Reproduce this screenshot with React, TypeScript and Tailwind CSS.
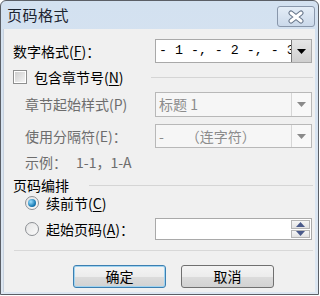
import React from "react"

const cjk = { fontFamily: '"Noto Sans CJK SC", "Noto Sans", sans-serif' }

function DropArrow({ disabled }: { disabled?: boolean }) {
  return (
    <svg width="9" height="5" viewBox="0 0 9 5">
      <path d="M0 0 H9 L4.5 5 Z" fill={disabled ? "#8a8a8a" : "#000"} />
    </svg>
  )
}

function Combo({ children, disabled, mono }: { children: React.ReactNode; disabled?: boolean; mono?: boolean }) {
  return (
    <div
      className={`ml-auto mr-[3px] w-[157px] h-full flex border ${
        disabled ? "border-[#b8b8b8] bg-[#f6f6f6]" : "border-[#a9a9a9] bg-white"
      }`}
    >
      <div
        className={`flex-1 flex items-center pl-[3px] overflow-hidden whitespace-nowrap ${
          disabled ? "text-[#8c8c8c]" : "text-black"
        } ${mono ? "text-[13.3px]" : "text-[14px]"}`}
        style={mono ? { fontFamily: '"Liberation Mono", monospace' } : cjk}
      >
        {children}
      </div>
      <div
        className={`w-[20px] flex items-center justify-center border-l ${
          disabled
            ? "border-[#d6d6d6] bg-[#f8f8f8]"
            : "border-[#7a7a7a] bg-gradient-to-b from-[#e6e6e6] to-[#cfcfcf]"
        }`}
      >
        <DropArrow disabled={disabled} />
      </div>
    </div>
  )
}

function Radio({ checked }: { checked?: boolean }) {
  return (
    <div className="w-[14px] h-[14px] rounded-full border border-[#8c8f94] bg-gradient-to-br from-[#e4e4e4] to-[#fbfbfb] flex items-center justify-center">
      {checked && (
        <div className="w-[8px] h-[8px] rounded-full bg-[radial-gradient(circle_at_35%_35%,#9fe0ff,#1c7fb8_60%,#0c4f80)]" />
      )}
    </div>
  )
}

function U({ c }: { c: string }) {
  return <span className="underline underline-offset-2">{c}</span>
}

export default function App() {
  return (
    <div className="w-[320px] h-[296px] bg-white" style={cjk}>
      <div className="w-[319px] h-[295px] border border-[#5b5f66] rounded-t-[6px] bg-gradient-to-b from-[#d3e1f0] to-[#dde7f2] flex flex-col">
        {/* Title bar */}
        <div className="h-[28px] flex items-center pl-[6px] pr-[3px]">
          <span className="text-[15px] text-[#1c2430] tracking-[0.5px]">页码格式</span>
          <div className="ml-auto mt-[3px] w-[38px] h-[21px] rounded-[3px] border border-[#8997ab] bg-gradient-to-b from-[#e4edf7] to-[#cbd9ea] flex items-center justify-center">
            <svg width="18" height="14" viewBox="0 0 18 14">
              <path d="M4 3 L14 11 M14 3 L4 11" stroke="#66758a" strokeWidth="5" strokeLinecap="round" />
              <path d="M4 3 L14 11 M14 3 L4 11" stroke="#fff" strokeWidth="3" strokeLinecap="round" />
            </svg>
          </div>
        </div>

        {/* Client area */}
        <div className="ml-[2px] mr-[3px] mb-[2px] flex-1 bg-[#f0f0f0] border-l border-[#c8d2de] flex flex-col pt-[10px] text-[14px] text-black">
          {/* 数字格式 */}
          <div className="h-[24px] flex items-center pl-[9px]">
            <span>
              数字格式(<U c="F" />)：
            </span>
            <Combo mono>- 1 -, - 2 -, - 3 -, …</Combo>
          </div>

          {/* 包含章节号 */}
          <div className="h-[28px] flex items-center pl-[9px]">
            <div className="w-[14px] h-[14px] border border-[#8e8f8f] bg-white flex items-center justify-center">
              <div className="w-[10px] h-[10px] bg-gradient-to-br from-[#cfcfcf] to-[#f4f4f4]" />
            </div>
            <span className="ml-[7px]">
              包含章节号(<U c="N" />)
            </span>
            <div className="ml-auto mr-[2px] w-[162px] h-px bg-[#d5d5d5]" />
          </div>

          {/* 章节起始样式 */}
          <div className="mt-[1px] h-[25px] flex items-center pl-[21px] text-[#6d6d6d]">
            <span>章节起始样式(P)</span>
            <Combo disabled>标题 1</Combo>
          </div>

          {/* 使用分隔符 */}
          <div className="mt-[7px] h-[24px] flex items-center pl-[21px] text-[#6d6d6d]">
            <span>使用分隔符(E)：</span>
            <Combo disabled>
              <span>-</span>
              <span className="ml-[22px]">（连字符）</span>
            </Combo>
          </div>

          {/* 示例 */}
          <div className="h-[28px] flex items-center pl-[21px] text-[#6d6d6d]">
            <span>示例：</span>
            <span className="ml-[9px]">1-1，1-A</span>
          </div>

          {/* 页码编排 */}
          <div className="h-[18px] flex items-center pl-[9px]">
            <span>页码编排</span>
            <div className="ml-auto mr-[2px] w-[224px] h-px bg-[#d5d5d5]" />
          </div>

          {/* 续前节 */}
          <div className="h-[18px] flex items-center pl-[21px]">
            <Radio checked />
            <span className="ml-[7px]">
              续前节(<U c="C" />)
            </span>
          </div>

          {/* 起始页码 */}
          <div className="mt-[6px] h-[22px] flex items-center pl-[21px]">
            <Radio />
            <span className="ml-[7px]">
              起始页码(<U c="A" />)：
            </span>
            <div className="ml-auto mr-[3px] w-[157px] h-full border border-[#a9a9a9] bg-white flex justify-end p-[1px]">
              <div className="w-[19px] flex flex-col gap-px">
                <div className="flex-1 border border-[#b5b5b5] bg-gradient-to-b from-[#f6f6f6] to-[#e2e2e2] flex items-center justify-center">
                  <svg width="9" height="5" viewBox="0 0 9 5">
                    <path d="M0 5 H9 L4.5 0 Z" fill="#4a5a8a" />
                  </svg>
                </div>
                <div className="flex-1 border border-[#b5b5b5] bg-gradient-to-b from-[#f6f6f6] to-[#e2e2e2] flex items-center justify-center">
                  <svg width="9" height="5" viewBox="0 0 9 5">
                    <path d="M0 0 H9 L4.5 5 Z" fill="#4a5a8a" />
                  </svg>
                </div>
              </div>
            </div>
          </div>

          {/* separator */}
          <div className="mt-[10px] ml-[10px] mr-[2px] h-px bg-[#d8d8d8]" />

          {/* Buttons */}
          <div className="mt-[14px] h-[23px] flex pl-[69px] gap-[15px]">
            <button className="w-[93px] h-full rounded-[3px] border border-[#3c7fb1] bg-[linear-gradient(#f4f4f4_0%,#ececec_50%,#dcdcdc_50%,#d2d2d2_100%)] shadow-[inset_0_0_0_1px_#9fd3f0] text-[14px]">
              确定
            </button>
            <button className="w-[93px] h-full rounded-[3px] border border-[#707070] bg-[linear-gradient(#f4f4f4_0%,#ececec_50%,#dcdcdc_50%,#d2d2d2_100%)] text-[14px]">
              取消
            </button>
          </div>
        </div>
      </div>
    </div>
  )
}
